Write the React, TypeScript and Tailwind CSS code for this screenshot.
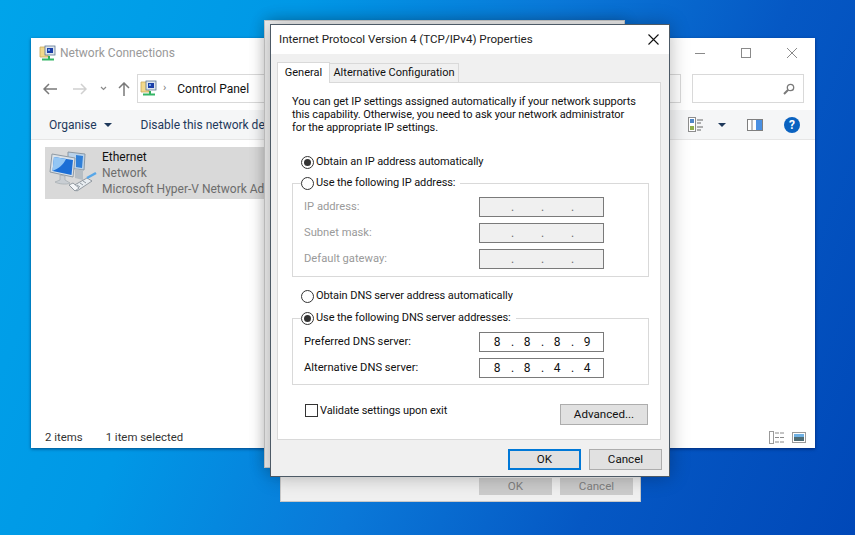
const font = "font-['Roboto','Open_Sans',sans-serif]";

function NetFolderIcon() {
  return (
    <svg width="17" height="17" viewBox="0 0 17 17" className="shrink-0">
      <path d="M1 2h5l1 1h2v9H1z" fill="#f3d98b" stroke="#c9a85a" strokeWidth="0.8" />
      <rect x="6" y="1" width="10" height="9" fill="#dfe6ee" stroke="#5d7690" strokeWidth="0.8" />
      <rect x="8" y="3" width="6" height="5" fill="#1c3fa8" />
      <rect x="9" y="4" width="2" height="2" fill="#6fa3e8" />
      <rect x="9" y="11" width="2" height="3" fill="#2fae5a" />
      <rect x="3" y="13.5" width="12" height="2" fill="#35b566" />
    </svg>
  );
}

function EthernetIcon() {
  return (
    <svg width="48" height="48" viewBox="0 0 48 48">
      <path d="M19 3l17 2-1 16-16-2z" fill="#b9d2ea" stroke="#8b98a3" />
      <path d="M27 6l7 1-1 12-6-1z" fill="#2f7fd8" />
      <path d="M3 5l23 4-2 19L1 23z" fill="#dbe3ea" stroke="#8f9aa4" />
      <path d="M5 8l19 3-1.500 15L3.500 22z" fill="#1b6ed6" />
      <path d="M5 8l12 2C15 15 9 20 3.500 22z" fill="#93c6f4" />
      <path d="M11 26l5 1v4l5 3c-3 2-12 1-15-1l5-2z" fill="#c9ced3" stroke="#9aa2a8" strokeWidth="0.6" />
      <path d="M26 20l8 1 0 10-8-2z" fill="#b6bdc3" />
      <path d="M22 38l16-9 5 3-15 10z" fill="#e8edf1" stroke="#7d878f" strokeWidth="0.8" />
      <path d="M25 38l3 2M28 36l3 2M31 34l3 2M34 32l3 2" stroke="#7d878f" strokeWidth="0.8" />
      <path d="M20 36l4-2 6 5-4 3z" fill="#f4f6f8" stroke="#7d878f" strokeWidth="0.8" />
      <path d="M38 29l9-5" stroke="#58a7e8" strokeWidth="2.500" />
    </svg>
  );
}

function Radio({ on }: { on?: boolean }) {
  return (
    <span className="w-[13px] h-[13px] rounded-full border border-[#333] bg-white flex items-center justify-center shrink-0">
      {on && <span className="w-[7px] h-[7px] rounded-full bg-[#333]" />}
    </span>
  );
}

function RadioLine({ on, label }: { on?: boolean; label: string }) {
  return (
    <div className="flex items-center gap-[2px] h-[14px] bg-white pr-[5px] w-max">
      <Radio on={on} />
      <span className="whitespace-nowrap text-[11px] tracking-[-0.08px] pt-[1px]">{label}</span>
    </div>
  );
}

function IpField({ parts, disabled }: { parts: string[]; disabled?: boolean }) {
  return (
    <div className={`w-[125px] h-[20px] border border-[#7a7a7a] flex items-center ${disabled ? 'bg-[#f0f0f0] text-[#6d6d6d]' : 'bg-white text-[#111]'}`}>
      {[0, 1, 2, 3].map((i) => (
        <div key={i} className="flex items-center">
          <span className={`w-[28px] text-center ${i === 0 ? 'ml-[3px]' : ''}`}>{parts[i]}</span>
          {i < 3 && <span className="w-[2px] text-center">.</span>}
        </div>
      ))}
    </div>
  );
}

function FieldRow({ label, parts, disabled }: { label: string; parts: string[]; disabled?: boolean }) {
  return (
    <div className="flex items-center justify-between h-[20px] pl-[11px] pr-[44px]">
      <span className={`text-[11.2px] pt-[1px] ${disabled ? 'text-[#9a9a9a]' : 'text-[#111]'}`}>{label}</span>
      <IpField parts={parts} disabled={disabled} />
    </div>
  );
}

function Btn({ label, primary, className }: { label: string; primary?: boolean; className?: string }) {
  return (
    <div className={`h-[21px] flex items-center justify-center bg-[#e1e1e1] text-[#111] text-[11.6px] pt-[1px] border ${primary ? 'border-2 border-[#0078d7]' : 'border-[#adadad]'} ${className ?? ''}`}>
      {label}
    </div>
  );
}

function Explorer() {
  return (
    <div className="absolute left-[31px] top-[38px] w-[784px] h-[410px] bg-white flex flex-col shadow-[0_1px_3px_rgba(0,0,40,0.5)] text-[12px]">
      <div className="h-[30px] flex items-center pl-[8px] gap-[4px] shrink-0">
        <NetFolderIcon />
        <span className="text-[#999]">Network Connections</span>
        <div className="ml-auto mr-[18px] flex items-center w-[102px]">
          <span className="w-[46px] flex"><span className="w-[10px] h-[1px] bg-[#8a8a8a]" /></span>
          <span className="w-[46px] flex"><span className="w-[10px] h-[10px] border border-[#8a8a8a]" /></span>
          <svg width="10" height="10" viewBox="0 0 10 10"><path d="M0 0l10 10M10 0L0 10" stroke="#8a8a8a" strokeWidth="1" /></svg>
        </div>
      </div>
      <div className="h-[42px] flex items-center shrink-0 pb-[1px]">
        <svg width="14" height="12" viewBox="0 0 14 12" className="ml-[12px]"><path d="M6 1L1 6l5 5M1 6h13" fill="none" stroke="#7a7a7a" strokeWidth="1.500" /></svg>
        <svg width="14" height="12" viewBox="0 0 14 12" className="ml-[16px]"><path d="M8 1l5 5-5 5M13 6H0" fill="none" stroke="#d0d0d0" strokeWidth="1.500" /></svg>
        <svg width="7" height="5" viewBox="0 0 7 5" className="ml-[13px]"><path d="M1 1l2.500 2.500L6 1" fill="none" stroke="#8a8a8a" strokeWidth="1.200" /></svg>
        <svg width="12" height="14" viewBox="0 0 12 14" className="ml-[11px]"><path d="M1 6l5-5 5 5M6 1v13" fill="none" stroke="#7a7a7a" strokeWidth="1.500" /></svg>
        <div className="ml-[7px] w-[544px] h-[29px] border border-[#d9d9d9] flex items-center pl-[2px]">
          <NetFolderIcon />
          <span className="ml-[6px] text-[#777] text-[11px]">›</span>
          <span className="ml-[11px] text-[#111]">Control Panel</span>
        </div>
        <div className="ml-[11px] w-[112px] h-[29px] border border-[#d9d9d9] flex items-center justify-end pr-[8px]">
          <svg width="12" height="12" viewBox="0 0 12 12"><circle cx="7.500" cy="4.500" r="3.200" fill="none" stroke="#7a7a7a" strokeWidth="1.300" /><path d="M5 7l-4 4" stroke="#7a7a7a" strokeWidth="2" /></svg>
        </div>
      </div>
      <div className="h-[30px] bg-[#f5f6f7] border-b border-[#e6e6e6] flex items-center pl-[18px] pr-[15px] text-[#1e395b] shrink-0">
        <span>Organise</span>
        <svg width="8" height="4" viewBox="0 0 8 4" className="ml-[7px]"><path d="M0 0h8L4 4z" fill="#1e395b" /></svg>
        <span className="ml-[29px]">Disable this network device</span>
        <svg width="16" height="15" viewBox="0 0 16 15" className="ml-auto"><rect x="0.500" y="0.500" width="7" height="14" fill="#fff" stroke="#8d8d8d" /><rect x="2" y="2" width="4" height="4" fill="#4f86c6" /><rect x="2" y="9" width="4" height="4" fill="#8fae4a" /><path d="M9 3h6M9 6h4M9 10h6M9 13h4" stroke="#666" strokeWidth="1" /></svg>
        <svg width="8" height="4" viewBox="0 0 8 4" className="ml-[14px]"><path d="M0 0h8L4 4z" fill="#1e395b" /></svg>
        <svg width="16" height="12" viewBox="0 0 16 12" className="ml-[21px]"><rect x="0.500" y="0.500" width="15" height="11" fill="#fff" stroke="#7f7f7f" /><rect x="9" y="1" width="6" height="10" fill="#4a90e2" /><path d="M5 1v10" stroke="#7f7f7f" /></svg>
        <div className="ml-[21px] w-[16px] h-[16px] rounded-full bg-[#0a62c0] text-white text-[12px] font-bold flex items-center justify-center">?</div>
      </div>
      <div className="flex-1 min-h-0 pt-[7px] pl-[14px]">
        <div className="w-[300px] h-[52px] bg-[#d9d9d9] flex items-center">
          <div className="w-[48px] ml-[4px] shrink-0"><EthernetIcon /></div>
          <div className="ml-[5px] flex flex-col whitespace-nowrap leading-[16px]">
            <span className="text-[#111]">Ethernet</span>
            <span className="text-[#6d6d6d]">Network</span>
            <span className="text-[#6d6d6d]">Microsoft Hyper-V Network Adapter</span>
          </div>
        </div>
      </div>
      <div className="h-[22px] flex items-center pl-[14px] pr-[9px] text-[#333] text-[11.4px] shrink-0">
        <span className="pt-[1px]">2 items</span>
        <span className="ml-[23px] pt-[1px]">1 item selected</span>
        <svg width="16" height="13" viewBox="0 0 16 13" className="ml-auto"><rect x="0.500" y="0.500" width="4" height="12" fill="#fff" stroke="#9a9a9a" /><path d="M6 2h4M11 2h4M6 6.500h4M11 6.500h4M6 11h4M11 11h4" stroke="#8a8a8a" strokeWidth="1" /></svg>
        <svg width="14" height="11" viewBox="0 0 14 11" className="ml-[7px]"><rect x="0.500" y="0.500" width="13" height="10" fill="#fff" stroke="#9a9a9a" /><rect x="2" y="2" width="10" height="3" fill="#6fb1e4" /><rect x="2" y="5" width="10" height="4" fill="#4e6b73" /></svg>
      </div>
    </div>
  );
}

function IpDialog() {
  return (
    <div className="absolute left-[270px] top-[24px] w-[400px] h-[453px] bg-[#f0f0f0] border border-[#4d5a66] flex flex-col text-[#111] text-[12px] shadow-[0_0_18px_rgba(0,0,0,0.28)]">
      <div className="h-[29px] bg-white flex items-center justify-between pl-[8px] pr-[10px] shrink-0">
        <span className="text-[#222] text-[11.6px]">Internet Protocol Version 4 (TCP/IPv4) Properties</span>
        <svg width="11" height="11" viewBox="0 0 11 11"><path d="M0.500 0.500l10 10M10.500 0.500l-10 10" stroke="#111" strokeWidth="1.100" /></svg>
      </div>
      <div className="flex items-end pl-[6px] pt-[7px] h-[28px] shrink-0 relative z-10 text-[11px]">
        <div className="w-[53px] h-[21px] bg-white border border-[#d9d9d9] border-b-0 flex items-center justify-center -mb-[1px] whitespace-nowrap">General</div>
        <div className="w-[129px] h-[19px] bg-[#f0f0f0] border border-[#d9d9d9] border-l-0 border-b-0 flex items-center justify-center whitespace-nowrap">Alternative Configuration</div>
      </div>
      <div className="ml-[6px] w-[384px] h-[358px] bg-white border border-[#d9d9d9] pl-[14px] pt-[12px] shrink-0">
        <p className="leading-[13px] whitespace-nowrap text-[11px] tracking-[-0.08px]">
          You can get IP settings assigned automatically if your network supports<br />
          this capability. Otherwise, you need to ask your network administrator<br />
          for the appropriate IP settings.
        </p>
        <div className="ml-[9px] mt-[21px]"><RadioLine on label="Obtain an IP address automatically" /></div>
        <div className="relative mt-[14px] w-[357px] h-[94px] border border-[#d9d9d9] flex flex-col gap-[6px] pt-[13px]">
          <div className="absolute left-[8px] -top-[8px]"><RadioLine label="Use the following IP address:" /></div>
          <FieldRow disabled label="IP address:" parts={['', '', '', '']} />
          <FieldRow disabled label="Subnet mask:" parts={['', '', '', '']} />
          <FieldRow disabled label="Default gateway:" parts={['', '', '', '']} />
        </div>
        <div className="ml-[9px] mt-[12px]"><RadioLine label="Obtain DNS server address automatically" /></div>
        <div className="relative mt-[15px] w-[357px] h-[67px] border border-[#d9d9d9] flex flex-col gap-[6px] pt-[13px]">
          <div className="absolute left-[8px] -top-[8px]"><RadioLine on label="Use the following DNS server addresses:" /></div>
          <FieldRow label="Preferred DNS server:" parts={['8', '8', '8', '9']} />
          <FieldRow label="Alternative DNS server:" parts={['8', '8', '4', '4']} />
        </div>
        <div className="flex items-start mt-[19px] pl-[13px] pr-[12px]">
          <span className="w-[13px] h-[13px] border border-[#333] bg-white shrink-0" />
          <span className="ml-[2px] leading-[13px] text-[11px] tracking-[-0.08px]">Validate settings upon exit</span>
          <Btn label="Advanced..." className="ml-auto w-[88px]" />
        </div>
      </div>
      <div className="flex justify-end gap-[8px] mt-[9px] pr-[7px]">
        <Btn primary label="OK" className="w-[73px]" />
        <Btn label="Cancel" className="w-[73px]" />
      </div>
    </div>
  );
}

export default function App() {
  return (
    <div className={`relative w-[855px] h-[535px] overflow-hidden ${font} bg-[linear-gradient(112deg,#00a4ea_0%,#0098e6_28%,#0a78d8_52%,#0558c4_74%,#0048b8_100%)]`}>
      <Explorer />
      <div className="absolute left-[264px] top-[20px] w-[361px] h-[448px] bg-[#f0f0f0] border border-[#c8c8c8] shadow-[0_0_14px_rgba(0,0,0,0.2)]" />
      <div className="absolute left-[280px] top-[440px] w-[361px] h-[62px] bg-[#f0f0f0] border border-[#c8c8c8] flex justify-end gap-[8px] pr-[7px] pt-[37px] text-[11.6px] text-[#808080]">
        <div className="w-[73px] h-[17px] bg-[#cccccc] flex items-center justify-center">OK</div>
        <div className="w-[73px] h-[17px] bg-[#cccccc] flex items-center justify-center">Cancel</div>
      </div>
      <IpDialog />
    </div>
  );
}
